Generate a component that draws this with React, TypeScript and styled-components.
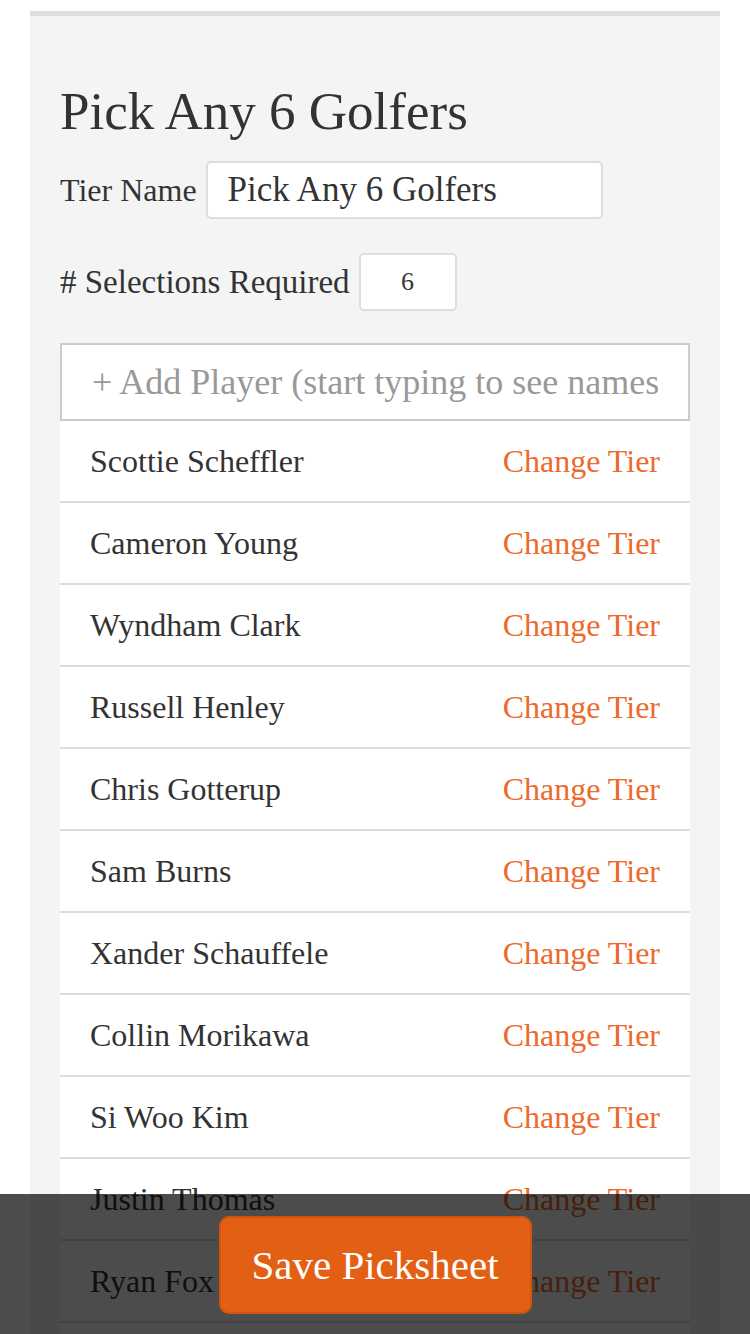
import React from 'react'
import styled, { createGlobalStyle } from 'styled-components'

const GlobalStyle = createGlobalStyle`
  body {
    margin: 0;
    background: #ffffff;
    font-family: 'Liberation Serif', 'Times New Roman', serif;
    color: #333333;
  }
  * {
    box-sizing: border-box;
  }
`

const Page = styled.div`
  padding: 11px 30px 160px;
`

const Panel = styled.div`
  background: #f4f4f4;
  border-top: 5px solid #dddddd;
  padding: 67px 30px 30px;
`

const Title = styled.h1`
  margin: 0 0 21px;
  font-size: 53px;
  line-height: 57px;
  font-weight: 400;
  color: #333333;
`

const FieldRow = styled.div<{ $gap: number }>`
  display: flex;
  align-items: center;
  gap: 9px;
  margin-bottom: ${({ $gap }) => $gap}px;
`

const Label = styled.label<{ $size: number }>`
  font-size: ${({ $size }) => $size}px;
  color: #333333;
`

const TextInput = styled.input<{ $width: number; $center?: boolean; $size: number }>`
  width: ${({ $width }) => $width}px;
  height: 58px;
  border: 2px solid #dddddd;
  border-radius: 5px;
  background: #ffffff;
  padding: 0 ${({ $center }) => ($center ? 0 : 20)}px;
  text-align: ${({ $center }) => ($center ? 'center' : 'left')};
  font-family: inherit;
  font-size: ${({ $size }) => $size}px;
  color: #333333;
  outline: none;
`

const AddPlayer = styled.input`
  display: block;
  width: 100%;
  height: 78px;
  border: 2px solid #cccccc;
  background: #ffffff;
  padding: 0 30px;
  font-family: inherit;
  font-size: 36px;
  color: #333333;
  outline: none;

  &::placeholder {
    color: #999999;
  }
`

const PlayerList = styled.ul`
  list-style: none;
  margin: 0;
  padding: 0;
`

const PlayerRow = styled.li`
  display: flex;
  align-items: center;
  justify-content: space-between;
  height: 82px;
  padding: 0 30px;
  background: #ffffff;
  border-bottom: 2px solid #dddddd;
  font-size: 32px;
`

const PlayerName = styled.span`
  color: #333333;
`

const ChangeTier = styled.a`
  color: #ec6a2c;
  text-decoration: none;
  cursor: pointer;
`

const SaveBar = styled.div`
  position: fixed;
  left: 0;
  right: 0;
  bottom: 0;
  height: 140px;
  background: rgba(0, 0, 0, 0.7);
  display: flex;
  justify-content: center;
  align-items: flex-start;
  padding-top: 22px;
`

const SaveButton = styled.button`
  width: 313px;
  height: 98px;
  background: #e35f14;
  border: 2px solid #d2550f;
  border-radius: 10px;
  color: #ffffff;
  font-family: inherit;
  font-size: 41px;
  cursor: pointer;
`

const players = [
  'Scottie Scheffler',
  'Cameron Young',
  'Wyndham Clark',
  'Russell Henley',
  'Chris Gotterup',
  'Sam Burns',
  'Xander Schauffele',
  'Collin Morikawa',
  'Si Woo Kim',
  'Justin Thomas',
  'Ryan Fox',
  'Tommy Fleetwood',
  'Patrick Cantlay',
]

const App = () => {
  return (
    <>
      <GlobalStyle />
      <Page>
        <Panel>
          <Title>Pick Any 6 Golfers</Title>
          <FieldRow $gap={34}>
            <Label $size={32}>Tier Name</Label>
            <TextInput $width={397} $size={35} defaultValue="Pick Any 6 Golfers" />
          </FieldRow>
          <FieldRow $gap={32}>
            <Label $size={33}># Selections Required</Label>
            <TextInput $width={98} $size={26} $center defaultValue="6" />
          </FieldRow>
          <AddPlayer placeholder="+ Add Player (start typing to see names)" />
          <PlayerList>
            {players.map((name) => (
              <PlayerRow key={name}>
                <PlayerName>{name}</PlayerName>
                <ChangeTier>Change Tier</ChangeTier>
              </PlayerRow>
            ))}
          </PlayerList>
        </Panel>
      </Page>
      <SaveBar>
        <SaveButton>Save Picksheet</SaveButton>
      </SaveBar>
    </>
  )
}

export default App
